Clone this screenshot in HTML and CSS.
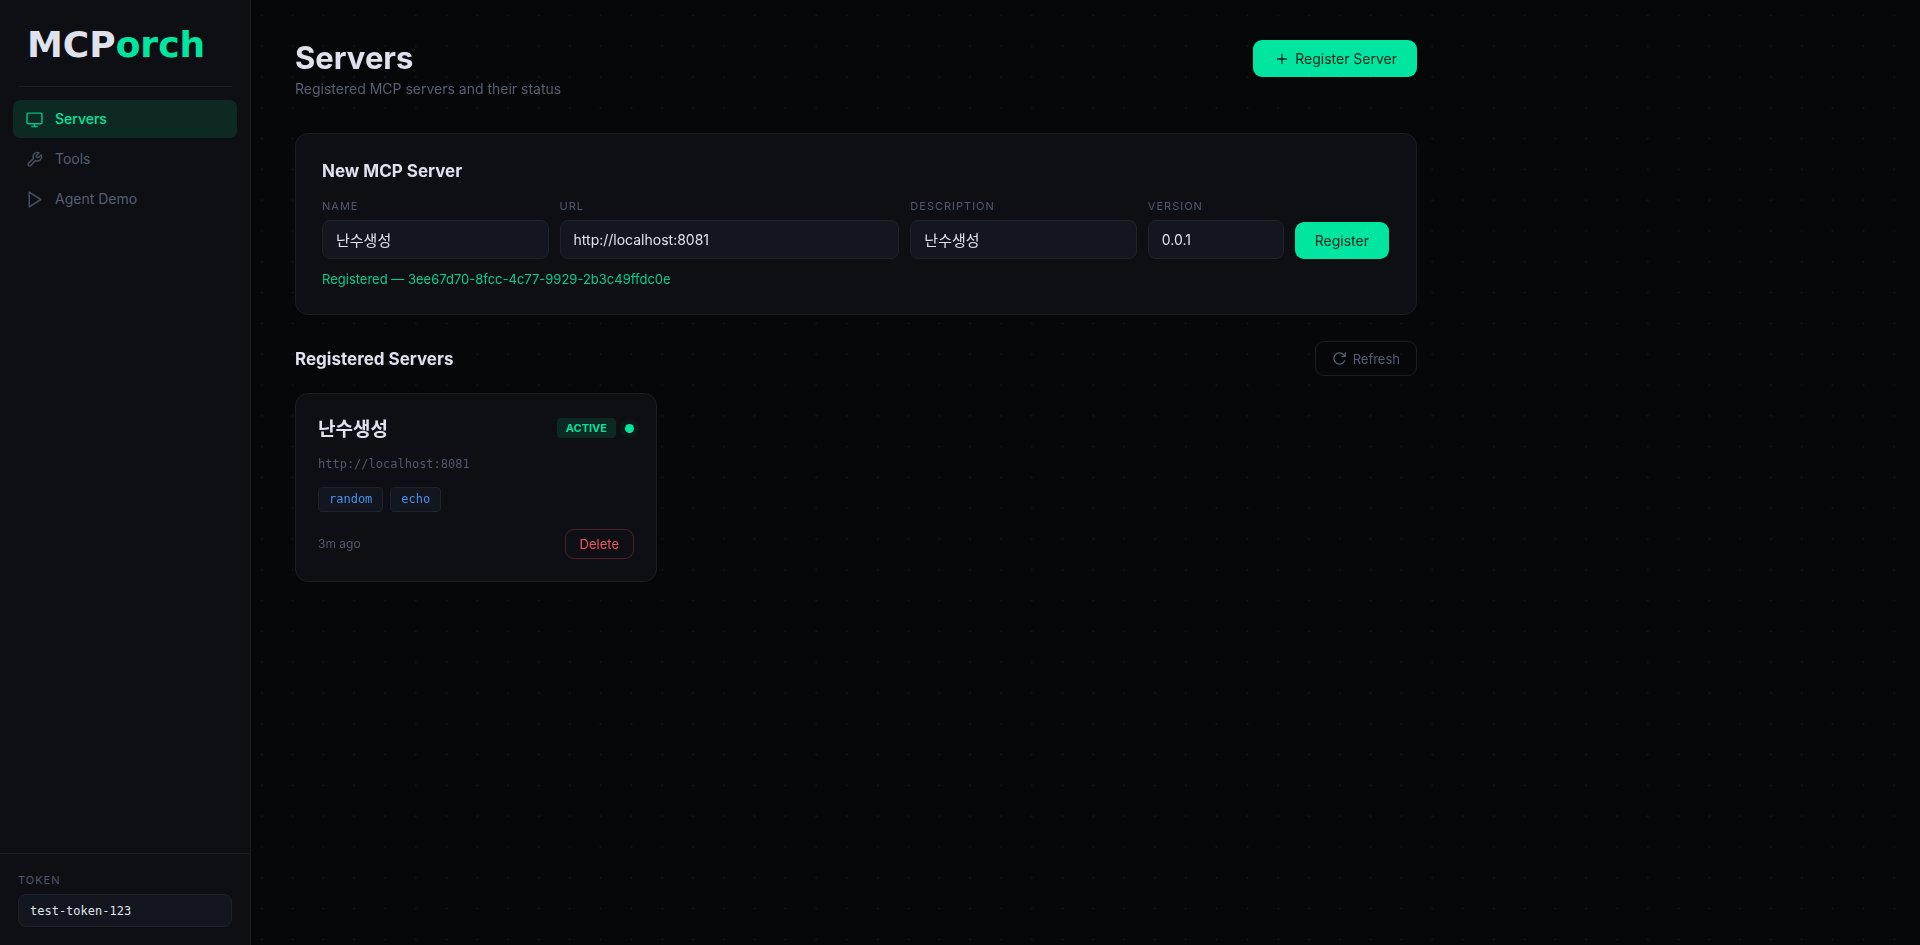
FILE: index.html
```html
<!DOCTYPE html>
<html lang="en">
<head>
<meta charset="utf-8">
<title>MCPorch – Servers</title>
<link rel="stylesheet" href="styles.css">
</head>
<body>
<svg class="dots" aria-hidden="true"><defs><pattern id="dot" width="30.8" height="30.8" patternUnits="userSpaceOnUse"><circle cx="15.4" cy="15.4" r="1.1" fill="#14161a"/></pattern></defs><rect width="100%" height="100%" fill="url(#dot)"/></svg>
<div class="app">
  <aside class="sidebar">
    <div class="logo">MCP<span class="logo-accent">orch</span></div>
    <nav class="nav">
      <a class="nav-link active" href="#servers"><svg class="nav-icon" viewBox="0 0 16 16"><rect x="1" y="2" width="14" height="10" rx="1"/><path d="M5.500 14.500h5M8 12v2.500"/></svg>Servers</a>
      <a class="nav-link" href="#tools"><svg class="nav-icon" viewBox="0 0 24 24"><path stroke-width="2" d="M14.700 6.300a1 1 0 0 0 0 1.400l1.600 1.600a1 1 0 0 0 1.400 0l3.770-3.770a6 6 0 0 1-7.940 7.940l-6.910 6.910a2.120 2.120 0 0 1-3-3l6.910-6.910a6 6 0 0 1 7.940-7.940l-3.760 3.760z"/></svg>Tools</a>
      <a class="nav-link" href="#demo"><svg class="nav-icon" viewBox="0 0 16 16"><path d="M3 1v14L14 8z"/></svg>Agent Demo</a>
    </nav>
    <div class="token">
      <label class="label" for="token">TOKEN</label>
      <input class="input token-input" id="token" type="text" value="test-token-123">
    </div>
  </aside>
  <main class="main">
    <header class="page-head">
      <div>
        <h1 class="title">Servers</h1>
        <p class="subtitle">Registered MCP servers and their status</p>
      </div>
      <button class="btn primary" type="button"><svg class="plus" viewBox="0 0 14 14"><path d="M7 3.500v7M3.500 7h7"/></svg>Register Server</button>
    </header>
    <section class="panel">
      <h2 class="heading">New MCP Server</h2>
      <form class="form">
        <div class="field"><label class="label" for="name">NAME</label><input class="input korean" id="name" type="text" value="난수생성"></div>
        <div class="field wide"><label class="label" for="url">URL</label><input class="input" id="url" type="text" value="http://localhost:8081"></div>
        <div class="field"><label class="label" for="desc">DESCRIPTION</label><input class="input korean" id="desc" type="text" value="난수생성"></div>
        <div class="field narrow"><label class="label" for="version">VERSION</label><input class="input" id="version" type="text" value="0.0.1"></div>
        <button class="btn primary" type="button">Register</button>
      </form>
      <p class="result">Registered — 3ee67d70-8fcc-4c77-9929-2b3c49ffdc0e</p>
    </section>
    <div class="list-head">
      <h2 class="heading">Registered Servers</h2>
      <button class="btn ghost" type="button"><svg class="refresh" viewBox="0 0 16 16"><path d="M13.500 10.500A6 6 0 1 1 12.500 4L14 5.500M14.200 2v3.700h-3.700"/></svg>Refresh</button>
    </div>
    <div class="cards">
      <article class="card">
        <div class="card-head">
          <h3 class="card-title">난수생성</h3>
          <span class="badge">ACTIVE</span>
          <span class="status-dot"></span>
        </div>
        <p class="card-url">http://localhost:8081</p>
        <div class="tags"><span class="tag">random</span><span class="tag">echo</span></div>
        <div class="card-foot">
          <span class="ago">3m ago</span>
          <button class="btn danger" type="button">Delete</button>
        </div>
      </article>
    </div>
  </main>
</div>
</body>
</html>
```
FILE: styles.css
```css
* { box-sizing: border-box; }
body {
  margin: 0;
  background: #060709;
  color: #dfe2ec;
  font-family: Inter, "Noto Sans CJK KR", sans-serif;
  font-size: 14px;
  line-height: 22px;
}
h1, h2, h3, p { margin: 0; }
button, input { font: inherit; color: inherit; }
svg { fill: none; stroke: currentColor; stroke-linecap: round; stroke-linejoin: round; flex: none; }
.dots { position: fixed; inset: 0; width: 100%; height: 100%; stroke: none; }
.app { position: relative; display: flex; min-height: 100vh; }

.sidebar {
  width: 251px;
  flex: none;
  display: flex;
  flex-direction: column;
  background: #0e0f14;
  border-right: 1px solid #1c1d22;
}
.logo {
  margin: 0 18px;
  padding: 29px 9px 25px;
  border-bottom: 1px solid #1c1d22;
  font-family: "DejaVu Sans", sans-serif;
  font-weight: 700;
  font-size: 36px;
  line-height: 32px;
}
.logo-accent { color: #00e5a0; }
.nav { flex: 1; padding: 13px 13px 0; display: flex; flex-direction: column; gap: 2px; }
.nav-link {
  display: flex;
  align-items: center;
  gap: 12px;
  height: 38px;
  padding: 0 13px;
  border-radius: 7px;
  color: #565e70;
  text-decoration: none;
}
.nav-link.active { background: #0c2924; color: #00e5a0; font-weight: 500; }
.nav-icon { width: 17px; height: 17px; opacity: .8; stroke-width: 1.4; }
.token { padding: 18px; border-top: 1px solid #1c1d22; }
.label { display: block; color: #4f586b; font-size: 11px; line-height: 16px; letter-spacing: 1px; }
.input {
  display: block;
  width: 100%;
  height: 39px;
  margin-top: 6px;
  padding: 0 13px;
  background: #13161e;
  border: 1px solid #20222a;
  border-radius: 8px;
}
.korean { font-size: 15px; }
.token-input { height: 33px; padding: 0 11px; font-family: "DejaVu Sans Mono", monospace; font-size: 12px; }

.main { flex: 1; max-width: 1210px; padding: 40px 44px; }
.page-head { display: flex; justify-content: space-between; align-items: flex-start; margin-bottom: 33px; }
.title { font-weight: 700; font-size: 31px; line-height: 36px; }
.subtitle { margin-top: 2px; color: #565e70; }
.btn {
  display: inline-flex;
  align-items: center;
  justify-content: center;
  border: 1px solid transparent;
  border-radius: 9px;
  background: none;
  white-space: nowrap;
}
.primary { height: 37px; padding: 0 19px; background: #00e5a0; color: #06251c; }
.plus { width: 18px; height: 18px; margin-right: 4px; }
.panel {
  padding: 26px 27px 24px 26px;
  background: #0e0f14;
  border: 1px solid #1c1d22;
  border-radius: 13px;
}
.heading { font-weight: 700; font-size: 17px; line-height: 22px; }
.form { display: flex; align-items: flex-end; gap: 11px; margin-top: 16px; }
.field { flex: 10 1 0; min-width: 0; }
.wide { flex-grow: 15; }
.narrow { flex-grow: 6; }
.result { margin-top: 9px; color: #00cf92; font-size: 13px; }
.list-head { display: flex; align-items: center; justify-content: space-between; margin: 26px 0 17px; }
.ghost { height: 35px; padding: 0 16px; border-color: #1c1d22; color: #565e70; font-size: 13px; }
.refresh { width: 15px; height: 15px; margin-right: 6px; stroke-width: 1.4; }
.cards { display: grid; grid-template-columns: repeat(3, 1fr); gap: 18px; }
.card {
  padding: 21px 22px 22px;
  background: #0e0f14;
  border: 1px solid #1c1d22;
  border-radius: 13px;
}
.card-head { display: flex; align-items: center; gap: 9px; }
.card-title { flex: 1; font-size: 19px; line-height: 26px; font-family: "Noto Sans CJK KR", sans-serif; font-weight: 700; }
.badge {
  padding: 0 9px;
  border-radius: 4px;
  background: #0c2924;
  color: #00e5a0;
  font-size: 11px;
  font-weight: 700;
  line-height: 20px;
}
.status-dot { width: 9px; height: 9px; border-radius: 50%; background: #00e5a0; box-shadow: 0 0 0 5px #0e1719; }
.card-url { margin-top: 13px; color: #4f586b; font-family: "DejaVu Sans Mono", monospace; font-size: 12px; line-height: 20px; }
.tags { display: flex; gap: 7px; margin-top: 13px; }
.tag {
  padding: 0 10px;
  background: #13161e;
  border: 1px solid #20222a;
  border-radius: 4px;
  color: #4590ea;
  font-family: "DejaVu Sans Mono", monospace;
  font-size: 12px;
  line-height: 23px;
}
.card-foot { display: flex; align-items: center; justify-content: space-between; margin-top: 17px; }
.ago { color: #4f586b; font-size: 12px; }
.danger { height: 30px; padding: 0 14px; border-color: #4a2026; color: #f25560; font-size: 13px; }
```
